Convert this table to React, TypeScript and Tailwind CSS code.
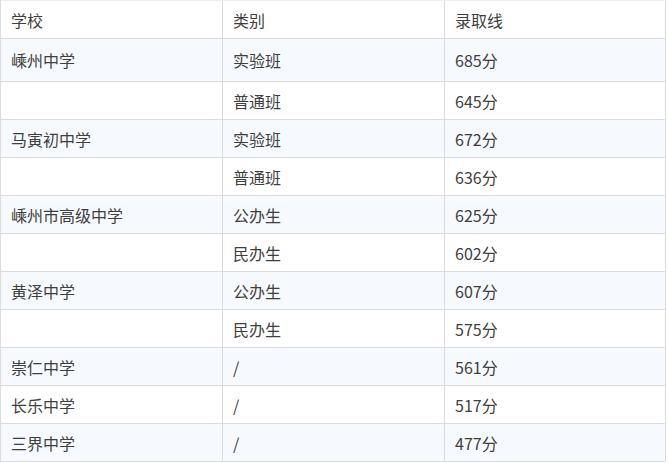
const rows: [string, string, string][] = [
  ["嵊州中学", "实验班", "685分"],
  ["", "普通班", "645分"],
  ["马寅初中学", "实验班", "672分"],
  ["", "普通班", "636分"],
  ["嵊州市高级中学", "公办生", "625分"],
  ["", "民办生", "602分"],
  ["黄泽中学", "公办生", "607分"],
  ["", "民办生", "575分"],
  ["崇仁中学", "/", "561分"],
  ["长乐中学", "/", "517分"],
  ["三界中学", "/", "477分"],
];

const cell = "flex items-center pl-[10px] border-r border-[#dcdcdc]";

export default function App() {
  return (
    <div
      className="w-[668px] h-[463px] bg-white text-[16px] text-[#3f3f3f]"
      style={{ fontFamily: '"Noto Sans CJK SC", "Noto Sans", sans-serif' }}
    >
      <div className="w-[666px] border-l border-[#dcdcdc]">
        <div className="grid grid-cols-[222px_222px_221px] h-[39px] border-b border-t border-t-[#eeeeee] border-b-[#dcdcdc] bg-white">
          <div className={cell}>学校</div>
          <div className={cell}>类别</div>
          <div className={cell}>录取线</div>
        </div>
        {rows.map(([school, kind, score], i) => (
          <div
            key={i}
            className={
              "grid grid-cols-[222px_222px_221px] border-b border-[#dcdcdc] " +
              (i === 0 ? "h-[43px] " : "h-[38px] ") +
              (i % 2 === 0 ? "bg-[#f6f9fd]" : "bg-white")
            }
          >
            <div className={cell}>{school}</div>
            <div className={cell}>{kind}</div>
            <div className={cell}>{score}</div>
          </div>
        ))}
      </div>
    </div>
  );
}
